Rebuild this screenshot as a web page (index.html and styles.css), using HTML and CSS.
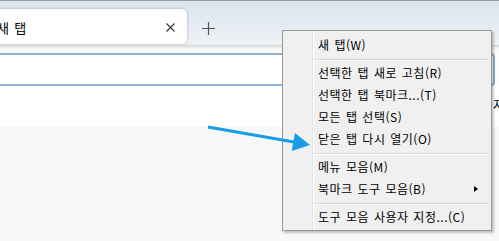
FILE: index.html
```html
<!DOCTYPE html>
<html lang="ko">
<head>
    <meta charset="UTF-8">
    <title>탭 메뉴</title>
    <link rel="stylesheet" href="styles.css">
</head>
<body>
    <div class="tabstrip">
        <div class="tab">
            <span class="tab-title">새 탭</span>
            <svg class="tab-close" width="9" height="9" viewBox="0 0 9 9">
                <path d="M0.5 0.5 L8.5 8.5 M8.5 0.5 L0.5 8.5" stroke="#333" stroke-width="1.1" fill="none"/>
            </svg>
        </div>
        <svg class="newtab" width="13" height="13" viewBox="0 0 13 13">
            <path d="M6.5 0 V13 M0 6.5 H13" stroke="#555" stroke-width="1.2" fill="none"/>
        </svg>
    </div>

    <div class="toolbar">
        <div class="urlbar"></div>
    </div>

    <div class="bookmarks">
        <span class="bookmark-text">지정</span>
    </div>

    <div class="content"></div>

    <!-- 탭 컨텍스트 메뉴 -->
    <div class="menu">
        <div class="menu-item">새 탭(W)</div>
        <div class="menu-sep"></div>
        <div class="menu-item">선택한 탭 새로 고침(R)</div>
        <div class="menu-item">선택한 탭 북마크...(T)</div>
        <div class="menu-item">모든 탭 선택(S)</div>
        <div class="menu-item">닫은 탭 다시 열기(O)</div>
        <div class="menu-sep"></div>
        <div class="menu-item">메뉴 모음(M)</div>
        <div class="menu-item has-sub">북마크 도구 모음(B)<span class="sub-arrow"></span></div>
        <div class="menu-sep"></div>
        <div class="menu-item">도구 모음 사용자 지정...(C)</div>
    </div>

    <svg class="pointer" width="499" height="241" viewBox="0 0 499 241">
        <line x1="208" y1="127" x2="294" y2="142" stroke="#1a9de3" stroke-width="3"/>
        <polygon points="310,145 291.7,150.9 294.9,133.1" fill="#1a9de3"/>
    </svg>
</body>
</html>
```

FILE: styles.css
```css
html, body {
    margin: 0px;
    padding: 0px;
}

body {
    width: 499px;
    height: 241px;
    overflow: hidden;
    position: relative;
    display: flex;
    flex-direction: column;
    font-family: 'Noto Sans CJK KR', 'Noto Sans', sans-serif;
    font-size: 12px;
    color: #000;
    background: #f7f8fa;
}

/* 탭 줄 */
.tabstrip {
    height: 44px;
    flex: 0 0 44px;
    border-top: 1px solid #9c9c9c;
    background: linear-gradient(180deg, #dce4ee, #eef2f7);
    display: flex;
    align-items: flex-start;
}

.tab {
    margin: 8px 0px 0px -14px;
    width: 201px;
    height: 35px;
    box-sizing: border-box;
    background: #fff;
    border-radius: 5px;
    box-shadow: 0px 0px 3px rgba(0, 0, 0, 0.28);
    display: flex;
    align-items: center;
    padding: 2px 12px 0px 11px;
}

.tab-title {
    flex: 1;
    font-size: 13px;
    letter-spacing: 0.3px;
    word-spacing: 1px;
}

.tab-close {
    display: block;
}

.newtab {
    display: block;
    margin: 21px 0px 0px 15px;
}

/* 주소 표시줄 */
.toolbar {
    height: 41px;
    flex: 0 0 41px;
    background: linear-gradient(180deg, #d2d2d2 0px, #e8e8e8 2px, #f8f9fb 4px, #fbfcfd 8px);
    box-sizing: border-box;
    padding-top: 8px;
}

.urlbar {
    margin-left: -10px;
    width: 505px;
    height: 33px;
    box-sizing: border-box;
    background: #fff;
    border: 2px solid #8db5d3;
    border-radius: 4px;
}

.bookmarks {
    height: 41px;
    flex: 0 0 41px;
    background: #fff;
    display: flex;
    align-items: center;
    padding-left: 493px;
    white-space: nowrap;
}

.bookmark-text {
    margin-top: -4px;
}

.content {
    flex: 1;
}

/* 컨텍스트 메뉴 */
.menu {
    position: absolute;
    left: 282px;
    top: 30px;
    width: 210px;
    box-sizing: border-box;
    border: 1px solid #979797;
    padding: 3px 2px 2px 0px;
    background: linear-gradient(90deg, #f0f0f0 29px, #e2e3e3 29px, #e2e3e3 30px, #fff 30px, #fff 31px, #f0f0f0 31px);
    box-shadow: 2px 2px 2px rgba(0, 0, 0, 0.22);
}

.menu-item {
    height: 22px;
    line-height: 22px;
    padding-left: 35px;
    white-space: nowrap;
    letter-spacing: 0.5px;
    word-spacing: 1px;
    display: flex;
    align-items: center;
}

.has-sub {
    justify-content: space-between;
    padding-right: 11px;
}

.sub-arrow {
    width: 0px;
    height: 0px;
    border-top: 3.5px solid transparent;
    border-bottom: 3.5px solid transparent;
    border-left: 4px solid #000;
}

.menu-sep {
    height: 0px;
    margin: 3px 1px 1px 31px;
    border-top: 1px solid #d7d7d7;
    border-bottom: 1px solid #fff;
}

.pointer {
    position: absolute;
    left: 0px;
    top: 0px;
}
```
